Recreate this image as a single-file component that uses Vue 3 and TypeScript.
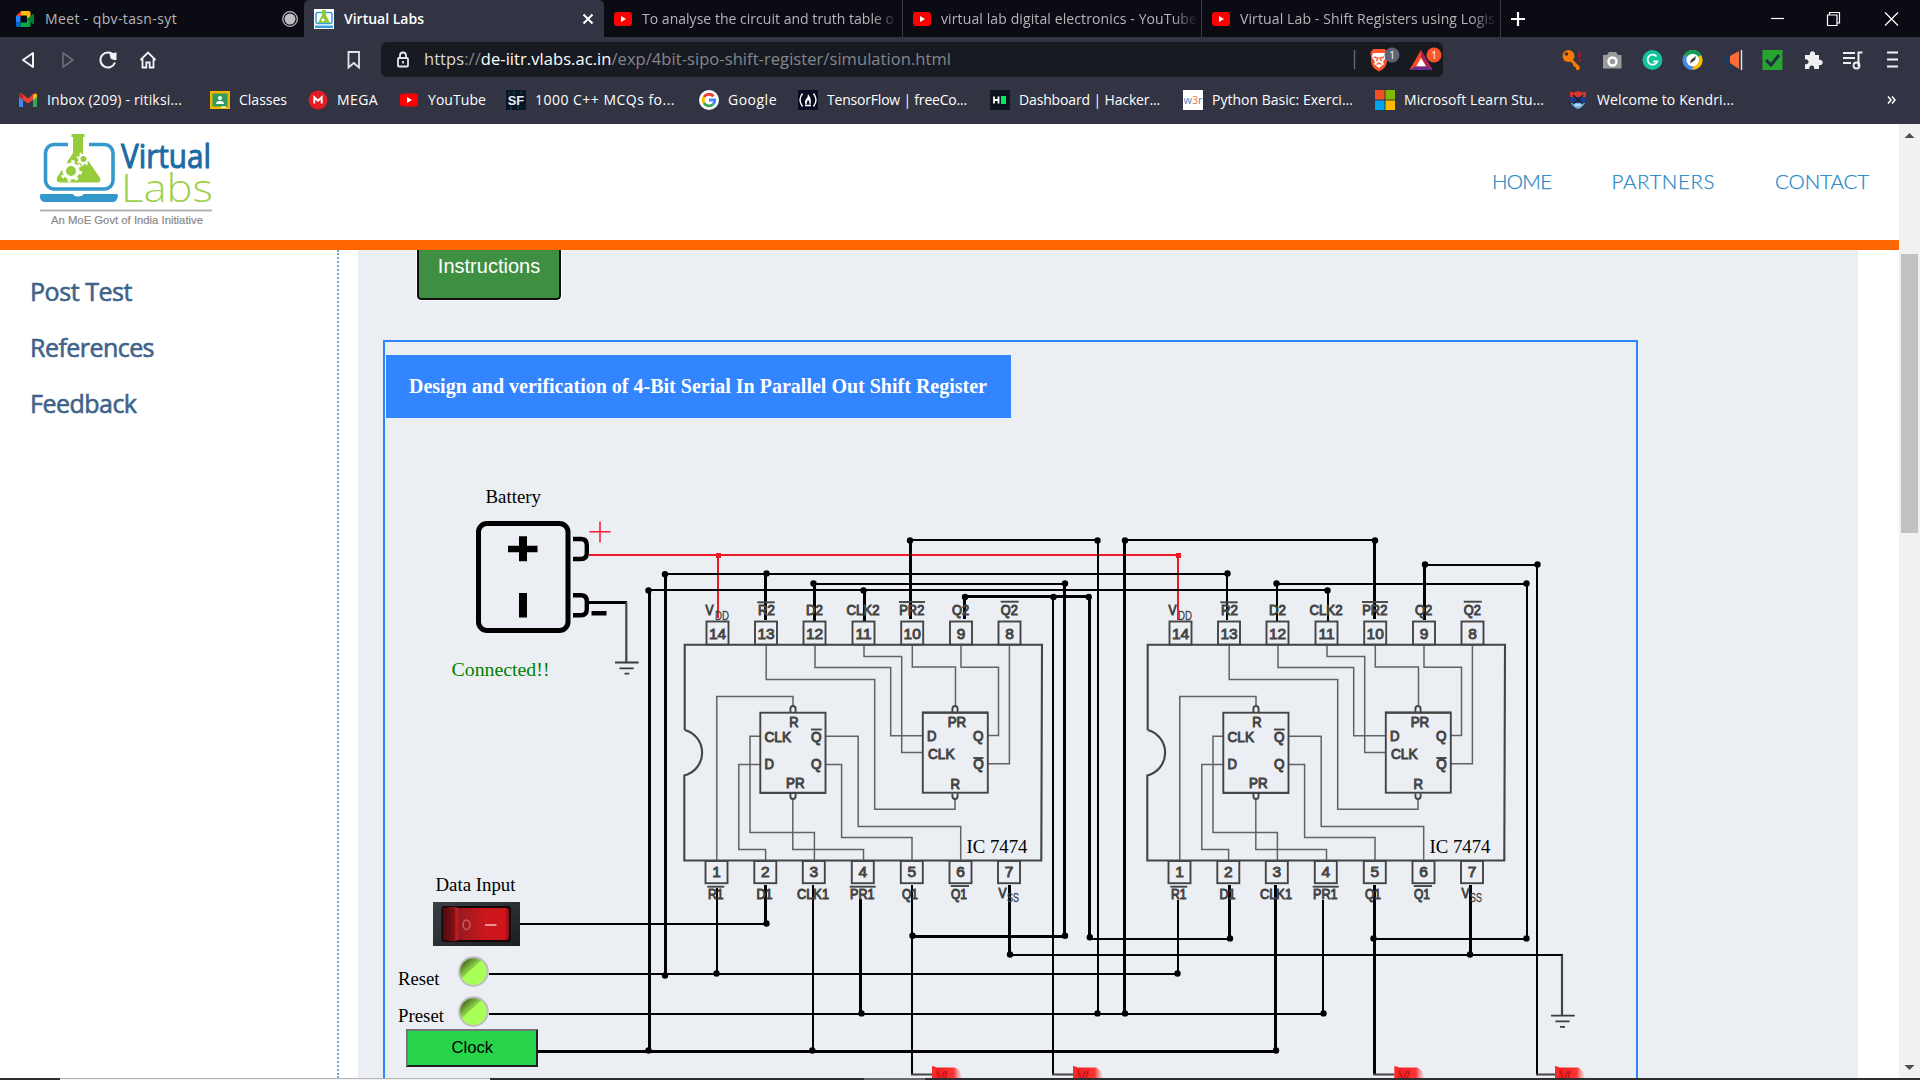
<script setup lang="ts">
type Wire = [number, number, number, number, number]
type Label = { t: string; x: number; y: number; w: number; bar?: [number, number, number] }

// Spreads a text run over a fixed width by adjusting its tracking.
const vFit = {
  mounted(el: HTMLElement, binding: { value: number }) {
    const n = (el.textContent ?? '').length
    const natural = el.getBoundingClientRect().width
    el.style.letterSpacing = `${(binding.value - natural) / n}px`
  },
}

const videoTabs = [
  { title: 'To analyse the circuit and truth table o', w: 252 },
  { title: 'virtual lab digital electronics - YouTube', w: 256 },
  { title: 'Virtual Lab - Shift Registers using Logis', w: 255 },
]

const bookmarks = [
  { id: 'gmail', label: 'Inbox (209) - ritiksi...', text: 135, slot: 192 },
  { id: 'classes', label: 'Classes', text: 48, slot: 98 },
  { id: 'mega', label: 'MEGA', text: 41, slot: 91 },
  { id: 'yt', label: 'YouTube', text: 58, slot: 107 },
  { id: 'sf', label: '1000 C++ MCQs fo...', text: 140, slot: 193 },
  { id: 'google', label: 'Google', text: 49, slot: 99 },
  { id: 'fcc', label: 'TensorFlow | freeCo...', text: 140, slot: 192 },
  { id: 'hr', label: 'Dashboard | Hacker...', text: 141, slot: 193 },
  { id: 'w3r', label: 'Python Basic: Exerci...', text: 141, slot: 192 },
  { id: 'ms', label: 'Microsoft Learn Stu...', text: 140, slot: 193 },
  { id: 'kv', label: 'Welcome to Kendri...', text: 137, slot: 180 },
]

const menu = [
  { t: 'HOME', w: 59.5 },
  { t: 'PARTNERS', w: 103.5 },
  { t: 'CONTACT', w: 94 },
]
const side = [
  { t: 'Post Test', w: 102 },
  { t: 'References', w: 124 },
  { t: 'Feedback', w: 106.5 },
]

const wires: Wire[] = [
  [649.5, 590, 649.5, 1051, 3], [665.5, 574, 665.5, 975, 3],
  [910, 540, 1098, 540, 2], [910.5, 540, 910.5, 619, 3], [1098, 540, 1098, 1013, 2],
  [665, 574, 1228, 574, 2], [765.5, 574, 765.5, 620, 3], [1227, 574, 1227, 620, 2],
  [813, 584, 1065, 584, 2], [814.5, 584, 814.5, 621, 3], [1064.5, 584, 1064.5, 937, 3],
  [649, 590, 1328, 590, 2], [864.5, 590, 864.5, 621, 3], [1328, 590, 1328, 621, 2],
  [965, 596.5, 1089, 596.5, 3], [964.5, 597, 964.5, 619, 3], [1053, 597, 1053, 1075, 2],
  [1089.5, 597, 1089.5, 939, 3],
  [1125, 540, 1375, 540, 2], [1124.5, 540, 1124.5, 1013, 3], [1374.5, 540, 1374.5, 619, 3],
  [1425, 565, 1538, 565, 2], [1424.5, 565, 1424.5, 620, 3], [1537, 565, 1537, 1075, 2],
  [1277, 584, 1527, 584, 2], [1277, 584, 1277, 621, 2], [1527, 584, 1527, 938, 2],
  [520, 924, 766, 924, 2], [765.5, 885, 765.5, 924, 3],
  [489, 974, 1177, 974, 2], [717, 888, 717, 974, 2],
  [538, 1051.5, 1276, 1051.5, 3], [813, 885, 813, 1051, 2],
  [489, 1014, 1323, 1014, 2], [860.5, 899, 860.5, 1013, 3],
  [912, 885, 912, 1075, 2], [912, 936.5, 1065, 936.5, 3],
  [1009.5, 885, 1009.5, 955, 3], [1010, 955, 1563, 955, 2],
  [1089, 939, 1230, 939, 2], [1229.5, 885, 1229.5, 939, 3],
  [1178, 900, 1178, 974, 2], [1275.5, 885, 1275.5, 1051, 3], [1323, 900, 1323, 1013, 2],
  [1374.5, 885, 1374.5, 1075, 3], [1374, 939, 1527, 939, 2], [1470.5, 885, 1470.5, 955, 3],
  [589, 602.5, 627, 602.5, 3],
]
const redWires: Wire[] = [
  [589, 555, 1180, 555, 2], [718, 555, 718, 618, 2], [1178, 555, 1178, 620, 2],
]
const nodes: [number, number][] = [
  [910, 540.5], [1097.5, 540.5], [665, 574.3], [766.5, 573.5], [1227.5, 573.5],
  [813.5, 583.5], [1065, 583.5], [648.5, 590.5], [863.5, 590.5], [1327.5, 590.5],
  [965, 597], [1053.5, 597], [1088.7, 597], [1125, 540.5], [1375, 540.5],
  [1425, 564.5], [1537.5, 564.5], [1276.5, 583.5], [1526.5, 583.5],
  [766.5, 923.5], [665, 975.5], [716.5, 973.5], [1177.5, 973.5],
  [648.5, 1050.5], [812.3, 1050.5], [1276, 1050.5],
  [861.5, 1013.4], [1097.5, 1013.4], [1125, 1013.4], [1323.5, 1013.4],
  [912.5, 935.7], [1065, 935.7], [1010, 954.5], [1470, 954.5],
  [1089.8, 937.3], [1230, 938.4], [1373.5, 938.4], [1526.5, 938.4],
]

const chips = [0, 463]
const topPins = [14, 13, 12, 11, 10, 9, 8].map((n, i) => ({ n, x: [706.5, 755, 803.5, 852.5, 901.2, 950, 998.5][i] }))
const lowPins = [1, 2, 3, 4, 5, 6, 7].map((n, i) => ({ n, x: [705.5, 754.3, 802.8, 851.8, 900.8, 949.5, 998][i] }))

const pinLabels: Label[] = [
  { t: 'V', x: 705.5, y: 615.3, w: 8 },
  { t: 'R2', x: 758, y: 615.3, w: 17, bar: [757.3, 774.7, 602.3] },
  { t: 'D2', x: 806, y: 615.3, w: 17 },
  { t: 'CLK2', x: 846.5, y: 615.3, w: 33 },
  { t: 'PR2', x: 899.3, y: 615.3, w: 25, bar: [899, 925, 602] },
  { t: 'Q2', x: 952, y: 615.3, w: 17.3 },
  { t: 'Q2', x: 1000.8, y: 615.3, w: 17, bar: [1000.7, 1018.7, 601.7] },
  { t: 'R1', x: 708, y: 899, w: 15.5, bar: [707.3, 724.3, 886.7] },
  { t: 'D1', x: 756.5, y: 899, w: 16 },
  { t: 'CLK1', x: 797, y: 899, w: 32 },
  { t: 'PR1', x: 850, y: 899, w: 24.5, bar: [849.7, 875.7, 886.7] },
  { t: 'Q1', x: 902, y: 899, w: 16 },
  { t: 'Q1', x: 951, y: 899, w: 16, bar: [950.7, 969, 886] },
  { t: 'V', x: 998.5, y: 898, w: 8 },
]
const gateLabels: Label[] = [
  { t: 'R', x: 789.3, y: 727.3, w: 9.3 },
  { t: 'CLK', x: 764.5, y: 741.5, w: 26.5 },
  { t: 'Q', x: 811, y: 741.5, w: 10.5, bar: [811, 821.7, 729.5] },
  { t: 'D', x: 764.5, y: 769.3, w: 9.5 },
  { t: 'Q', x: 811, y: 769.3, w: 10.5 },
  { t: 'PR', x: 786, y: 788, w: 18.5 },
  { t: 'PR', x: 947.7, y: 727.3, w: 18.5 },
  { t: 'D', x: 927, y: 740.7, w: 9.5 },
  { t: 'Q', x: 973, y: 740.7, w: 10.5 },
  { t: 'CLK', x: 928, y: 759, w: 26.5 },
  { t: 'Q', x: 973.3, y: 769, w: 10.5, bar: [973.3, 983.5, 758] },
  { t: 'R', x: 950.5, y: 789.3, w: 9.5 },
]
const traces = [
  'M766.2 645V679.5H874.7V809.3H955V799.5',
  'M815 645V667.4H890.7V735.7H922.7',
  'M864 645V656.4H901.7V752.4H922.7',
  'M912.3 645V667H955.5V706',
  'M961 645V667.3H998.5V735.5H988',
  'M1009.4 645V763.8H988',
  'M716.8 861V696.4H793V706',
  'M760.3 736.2H750V832.5H814.4V861',
  'M760.3 764.4H738.8V849.4H765.6V861',
  'M792.8 799.5V849.4H863.5V861',
  'M825.5 736.2H858.2V826.4H960.7V861',
  'M825.5 764.4H841.6V837.6H912V861',
]
const leds = [
  { wire: 912, x: 932 }, { wire: 1053, x: 1073 }, { wire: 1374, x: 1394.3 }, { wire: 1537, x: 1555 },
]
const pushButtons = [971.5, 1011.5]
</script>

<template>
  <div class="screen">
    <div class="tabs">
      <div class="tab first">
        <svg width="20" height="20" viewBox="0 0 20 20">
          <path d="M1 7 6 2v5z" fill="#ea4335" /><path d="M6 2h8q1.500 0 1.500 1.500V8l-3.500 2V6.500H6z" fill="#fbbc04" />
          <path d="M1 7h4.500v6.500H1z" fill="#2684fc" /><path d="M1 13.500h4.500V18H2.500Q1 18 1 16.500z" fill="#0066da" />
          <path d="M5.500 13.500H12V10l3.500 2v4.500Q15.500 18 14 18H5.500z" fill="#00ac47" /><path d="M12 10l6-5q1-.6 1 .5v9q0 1.100-1 .5z" fill="#00832d" />
        </svg>
        <span v-fit="132" class="tt">Meet - qbv-tasn-syt</span>
        <svg class="rec" width="18" height="18" viewBox="0 0 18 18"><circle cx="9" cy="9" r="7.300" fill="none" stroke="#bdbdc2" stroke-width="1.200" /><circle cx="9" cy="9" r="5.500" fill="#bdbdc2" /></svg>
      </div>
      <div class="tab active">
        <svg width="20" height="20" viewBox="0 0 20 20"><path fill="#fff" d="M0 0h20v20H0z" /><rect x="2" y="3.500" width="16" height="11" rx="2" fill="none" stroke="#3a9fd8" stroke-width="1.500" /><path d="M8 1h4v5l4 8H4l4-8z" fill="#8fc83c" /><circle cx="9" cy="11" r="1.500" fill="#fff" /><path d="M1 16.500h18V19H1z" fill="#3a9fd8" /></svg>
        <span v-fit="80" class="tt">Virtual Labs</span>
        <svg class="x" width="12" height="12" viewBox="0 0 12 12"><path d="M1.500 1.500l9 9M10.500 1.500l-9 9" stroke="#fff" stroke-width="2" /></svg>
      </div>
      <div v-for="v in videoTabs" :key="v.title" class="tab video">
        <svg width="18" height="14" viewBox="0 0 18 14"><rect width="18" height="14" rx="3" fill="#f00" /><path d="M7 4v6l5-3z" fill="#fff" /></svg>
        <div class="clip"><span v-fit="v.w" class="tt">{{ v.title }}</span></div>
      </div>
      <svg class="plus" width="16" height="16" viewBox="0 0 16 16"><path d="M8 1v14M1 8h14" stroke="#fff" stroke-width="2.200" /></svg>
      <svg class="win" width="130" height="16" viewBox="0 0 130 16" fill="none" stroke="#fff" stroke-width="1.200">
        <path d="M2 7.500h13" /><path d="M58.500 4h9.500v10.500h-9.500zM60.500 4V1.500h10V12h-2.500" /><path d="M116 1.500l13 13M129 1.500l-13 13" />
      </svg>
    </div>

    <div class="toolbar">
      <svg class="nav" width="150" height="24" viewBox="0 0 150 24" fill="none" stroke="#f2f2f5" stroke-width="2">
        <path d="M15 5v14L5 12z" stroke-linejoin="round" />
        <path d="M45 5v14l10-7z" stroke="#6b6d79" stroke-width="1.600" stroke-linejoin="round" />
        <path d="M96 7.500A7.500 7.500 0 1 0 97 14.500" /><path d="M91.500 5.500l7-1v7.500q-5 0-6-2z" fill="#f2f2f5" stroke="none" />
        <path d="M122.500 12l7.500-7.500 7.500 7.500M124.500 11v8.500h3.800v-5h3.400v5h3.800V11" stroke-width="1.800" />
      </svg>
      <svg class="mark" width="16" height="20" viewBox="0 0 16 20"><path d="M2.500 2h10.500v15.500L7.800 13l-5.300 4.500z" fill="none" stroke="#e6e6ea" stroke-width="1.800" /></svg>
      <div class="url">
        <svg width="14" height="18" viewBox="0 0 14 18" fill="none" stroke="#e6e6ea" stroke-width="1.800"><rect x="2" y="7" width="10" height="8.500" rx="1" /><path d="M4 7V4.500a3 3 0 0 1 6 0V7M7 10v2.500" /></svg>
        <span v-fit="527" class="addr"><i>https</i>://<b>de-iitr.vlabs.ac.in</b>/exp/4bit-sipo-shift-register/simulation.html</span>
        <svg class="shields" width="92" height="34" viewBox="1351 43 92 34">
          <path d="M1354.500 50v19" stroke="#666a72" stroke-width="1.300" />
          <path d="M1370.500 52l3-3h11l3.500 3-1.500 12q-1 4-7.500 7.500-6.500-3.500-7.500-7.500z" fill="#fb542b" /><path d="M1373 53h12l1 4-3 5 1 2-5 4-5-4 1-2-3-5z" fill="#fff" /><path d="M1374 57l4 1.200-1.500 3M1384 57l-4 1.200 1.500 3M1376.500 64.500l2.500-1.500 2.500 1.500" fill="none" stroke="#fb542b" stroke-width="1.400" />
          <circle cx="1392" cy="55" r="7.500" fill="#5f6375" /><text x="1392" y="58.500" class="badge">1</text>
          <path d="M1421 50l-11.500 20h23z" fill="#ff4724" /><path d="M1421 50l11.500 20-5.500-3.500-6-10z" fill="#9e1f63" /><path d="M1409.500 70h23l-5.500-3.500h-12z" fill="#662d91" /><path d="M1421 58l-4.800 8.300h9.600z" fill="#fff" />
          <circle cx="1434" cy="55" r="7.500" fill="#fb542b" /><text x="1434" y="58.500" class="badge">1</text>
        </svg>
      </div>
      <svg class="ext" width="350" height="26" viewBox="1555 47 350 26">
        <g><circle cx="1568.500" cy="56" r="6" fill="#f57c00" /><circle cx="1566.500" cy="54" r="1.800" fill="#323443" /><path d="M1572 59l8 8-1 3h-2.500l-1-3-2-.5-.5-2.500-3-3z" fill="#f57c00" /><path d="M1579.500 52v6M1579.500 59.500v2" stroke="#e0002a" stroke-width="2" /></g>
        <g><path d="M1603 55h4l2-3h7l2 3h3.500v13.500h-18.500z" fill="#9b9b9b" /><circle cx="1612.500" cy="61.500" r="4" fill="none" stroke="#fff" stroke-width="2.400" /></g>
        <g><circle cx="1652.400" cy="60" r="10" fill="#11c39a" /><path d="M1656.500 56.500a5 5 0 1 0 .8 5h-4" fill="none" stroke="#fff" stroke-width="1.800" /></g>
        <g><circle cx="1692.700" cy="60" r="10" fill="#fbbc04" /><path d="M1692.700 60l-8.700-5a10 10 0 0 1 17.400 0z" fill="#0f9d58" /><path d="M1692.700 60v10a10 10 0 0 1-8.700-15z" fill="#4285f4" /><circle cx="1692.700" cy="60" r="6.300" fill="#fff" /><path d="M1690 63.500l1-3.500 5-4-1 4z" fill="#333" /></g>
        <g><path d="M1723 56l7-1v9l3 5h-5l-2-5-3-1z" fill="#1f3a57" /><path d="M1730 56l9-5v18l-9-6z" fill="#ff6c3b" /><path d="M1741.500 50v20" stroke="#d8e0e8" stroke-width="1.500" /></g>
        <path d="M1762.500 50h20v20h-20z" fill="#28a52f" /><path d="M1766 60l5 5 8-10" fill="none" stroke="#222c44" stroke-width="3" />
        <path d="M1805 55h5a2.700 2.700 0 1 1 5 0h4v5a2.700 2.700 0 1 1 0 5v4h-5a2.500 2.500 0 1 0-4.500 0h-4.500v-5a2.500 2.500 0 1 0 0-4.500z" fill="#f0f0f3" />
        <path d="M1843 53h12M1843 58h12M1843 63h8" stroke="#f0f0f3" stroke-width="1.800" /><path d="M1858.500 66V52.500h4" stroke="#f0f0f3" stroke-width="2" fill="none" /><circle cx="1856.500" cy="65.500" r="3" fill="none" stroke="#f0f0f3" stroke-width="1.800" />
        <path d="M1887 52.500h11M1887 59.500h11M1887 66.500h11" stroke="#f0f0f3" stroke-width="1.800" />
      </svg>
    </div>

    <div class="marks">
      <div v-for="b in bookmarks" :key="b.id" class="bm" :style="{ width: b.slot + 'px' }">
        <svg width="20" height="20" viewBox="0 0 20 20">
          <g v-if="b.id === 'gmail'"><path d="M1 5v11q0 1 1 1h3V8z" fill="#4285f4" /><path d="M19 5v11q0 1-1 1h-3V8z" fill="#34a853" /><path d="M1 6q0-3.500 3-2.500l6 5 6-5q3-1 3 2.500l-4 4-5 3.500L5 10z" fill="#ea4335" /><path d="M15 5v5l4-3V5q-1-2.500-4 0z" fill="#fbbc04" /><path d="M1 5v2l4 3V5Q2 2.500 1 5z" fill="#c5221f" /></g>
          <g v-else-if="b.id === 'classes'"><path d="M0 1h20v18H0z" fill="#f4b400" /><path d="M2.500 3.500h15v13h-15z" fill="#2f9e5c" /><circle cx="10" cy="8" r="2" fill="#fff" /><path d="M6 14q0-3 4-3t4 3z" fill="#fff" /><path d="M11 16.500h5V18h-5z" fill="#eee" /></g>
          <g v-else-if="b.id === 'mega'"><circle cx="10" cy="10" r="9.500" fill="#e31b23" /><path d="M6.300 13.500V7.200l3.700 3.500 3.700-3.500v6.300" fill="none" stroke="#fff" stroke-width="1.900" /></g>
          <g v-else-if="b.id === 'yt'"><rect x="1" y="3.500" width="18" height="13" rx="3" fill="#f00" /><path d="M8 7v6l5-3z" fill="#fff" /></g>
          <g v-else-if="b.id === 'sf'"><path d="M0 0h20v20H0z" fill="#081523" /><path d="M3 2v3M8 1v4M15 1v3M5 16v4M12 15v4" stroke="#17456b" /><text x="10" y="14.500" class="sf">SF</text></g>
          <g v-else-if="b.id === 'google'"><circle cx="10" cy="10" r="10" fill="#fff" /><g fill="none" stroke-width="2.800"><path d="M14.500 6.200A6 6 0 0 0 5 7" stroke="#ea4335" /><path d="M5 7a6 6 0 0 0 0 6" stroke="#fbbc04" /><path d="M5 13a6 6 0 0 0 9 1.500" stroke="#34a853" /><path d="M14 14.500a6 6 0 0 0 1.800-4.500H10" stroke="#4285f4" /></g></g>
          <g v-else-if="b.id === 'fcc'"><path d="M0 0h20v20H0z" fill="#0a0a23" /><path d="M4.500 3.500q-5 6.500 0 13M15.500 3.500q5 6.500 0 13M7 15.500h6" fill="none" stroke="#fff" stroke-width="1.400" /><path d="M10 4q4 5 2.500 10.500h-1.200Q12 11 10 10q-1.500 2-1.300 4.500H7.500Q6 11 8.500 8.500 10 7 10 4z" fill="#fff" /></g>
          <g v-else-if="b.id === 'hr'"><path d="M0 0h20v20H0z" fill="#0e141e" /><path d="M4 6.500v7M8.500 6.500v7M4 10h4.500" stroke="#fff" stroke-width="1.800" /><path d="M11 6h5v8h-5z" fill="#00ea64" /></g>
          <g v-else-if="b.id === 'w3r'"><path d="M0 0h20v20H0z" fill="#fff" /><text x="0.500" y="13.500" textLength="19" lengthAdjust="spacingAndGlyphs" class="w3">w<tspan fill="#ee7a2f">3</tspan>r</text></g>
          <g v-else-if="b.id === 'ms'"><path d="M0 0h9.500v9.500H0z" fill="#f25022" /><path d="M10.500 0H20v9.500h-9.500z" fill="#7fba00" /><path d="M0 10.500h9.500V20H0z" fill="#00a4ef" /><path d="M10.500 10.500H20V20h-9.500z" fill="#ffb900" /></g>
          <g v-else><path d="M2 1.500l4 1 4-1.500 4 1.500 4-1v6H2z" fill="#d9362a" /><path d="M2 7h16l-1 6H3z" fill="#1c3d96" /><path d="M3 13h14q-2 4-7 6-5-2-7-6z" fill="#6db6e6" /><path d="M5 5l5 5 5-5M5 14l5-4 5 4" stroke="#222" fill="none" stroke-width="1.600" /><path d="M7 15h6" stroke="#fff" /></g>
        </svg>
        <span v-fit="b.text">{{ b.label }}</span>
      </div>
      <svg class="more" width="10" height="10" viewBox="0 0 10 10"><path d="M1 1.500l3 3.500-3 3.500M5 1.500l3 3.500-3 3.500" fill="none" stroke="#fff" stroke-width="1.500" /></svg>
    </div>

    <div class="page">
      <div class="doc">
        <header>
          <svg class="logo" width="180" height="98" viewBox="36 132 180 98">
            <path d="M68 145.500H54a8.500 8.500 0 0 0-8.500 8.500v27.500a8.500 8.500 0 0 0 8.500 8.500h50.500a8.500 8.500 0 0 0 8.500-8.500V154a8.500 8.500 0 0 0-8.500-8.500H89" fill="none" stroke="#3399cc" stroke-width="3.600" />
            <path d="M71.500 135h13v3H83v16l17 25q1.500 4.500-3 4.500H60.500q-5 0-3.500-5l16-24.500v-16h-1.500z" fill="#96cb3c" />
            <circle cx="71" cy="172" r="6.800" fill="none" stroke="#fff" stroke-width="3.600" /><circle cx="71" cy="172" r="9.700" fill="none" stroke="#fff" stroke-width="2.600" stroke-dasharray="3.400 4.218" />
            <circle cx="83.500" cy="160" r="4.200" fill="none" stroke="#fff" stroke-width="2.300" /><circle cx="83.500" cy="160" r="6" fill="none" stroke="#fff" stroke-width="1.600" stroke-dasharray="2.200 2.512" />
            <path d="M42 195h31q1 2.500 5 2.500t6-2.500h32q3 0 1.500 3.500-1 4.500-5 4.500H45q-4 0-5-4.500-1-3.500 2-3.500z" fill="#3399cc" />
            <text x="121" y="169" class="virt" textLength="90" lengthAdjust="spacingAndGlyphs">Virtual</text>
            <text x="121" y="202.500" class="labs" textLength="92" lengthAdjust="spacingAndGlyphs">Labs</text>
            <path d="M40 211.500h172" stroke="#b4b4b4" stroke-width="2" />
            <text x="51" y="225" class="moe" textLength="152" lengthAdjust="spacingAndGlyphs">An MoE Govt of India Initiative</text>
          </svg>
          <nav><a v-for="m in menu" :key="m.t"><span v-fit="m.w">{{ m.t }}</span></a></nav>
        </header>
        <div class="cols">
          <aside><div v-for="s in side" :key="s.t"><span v-fit="s.w">{{ s.t }}</span></div></aside>
          <main>
            <button class="instr">Instructions</button>
            <section class="frame">
              <h1><span v-fit="578">Design and verification of 4-Bit Serial In Parallel Out Shift Register</span></h1>
              <svg class="board" width="1251" height="660" viewBox="385 418 1251 660">
                <defs>
                  <linearGradient id="led" x1="0" x2="1"><stop offset="0" stop-color="#f01c1c" /><stop offset=".7" stop-color="#ff3636" /><stop offset="1" stop-color="#ff8a8a" stop-opacity=".15" /></linearGradient>
                  <linearGradient id="case" x1="0" y1="0" x2="1" y2="1"><stop offset="0" stop-color="#394046" /><stop offset="1" stop-color="#1a1e1e" /></linearGradient>
                  <linearGradient id="rocker" x1="0" x2="1"><stop offset="0" stop-color="#55090e" /><stop offset=".17" stop-color="#7d1015" /><stop offset=".2" stop-color="#c51b22" /><stop offset=".25" stop-color="#98191f" /><stop offset=".65" stop-color="#cb171c" /><stop offset=".93" stop-color="#cf151b" /><stop offset="1" stop-color="#8a1014" /></linearGradient>
                  <linearGradient id="lamp" x1=".15" y1=".1" x2=".6" y2=".6"><stop offset="0" stop-color="#47691f" /><stop offset=".62" stop-color="#93d84c" /><stop offset=".64" stop-color="#a8ff58" /></linearGradient>
                </defs>

                <g shape-rendering="crispEdges">
                  <line v-for="(w, i) in redWires" :key="'r' + i" :x1="w[0]" :y1="w[1]" :x2="w[2]" :y2="w[3]" :stroke-width="w[4]" stroke="#ed1c24" />
                  <line v-for="(w, i) in wires" :key="'w' + i" :x1="w[0]" :y1="w[1]" :x2="w[2]" :y2="w[3]" :stroke-width="w[4]" stroke="#000" />
                  <path d="M716 553h5v5h-5zM1176 553h5v5h-5z" fill="#ed1c24" />
                </g>
                <circle v-for="(n, i) in nodes" :key="'n' + i" :cx="n[0]" :cy="n[1]" r="3.200" />

                <text x="485.500" y="503" class="serif" textLength="55.500" lengthAdjust="spacingAndGlyphs">Battery</text>
                <rect x="478.500" y="523.500" width="89.500" height="107" rx="8.500" fill="none" stroke="#000" stroke-width="5" />
                <path d="M508 545.700h11v-9.400h8v9.400h10.500v6.600H527v9h-8v-9h-11zM519 593h8v24.500h-8z" />
                <path d="M573 539h8q5.800 0 5.800 6v8q0 6-5.800 6h-8M573 595.300h8q5.800 0 5.800 6v8q0 6-5.800 6h-8" fill="none" stroke="#000" stroke-width="4.400" />
                <path d="M600 521.500v21M589.500 531.700h21" stroke="#ff1430" stroke-width="1.500" />
                <path d="M591.500 611h15v4.500h-15z" />
                <path d="M626.300 602v60M1562 955v60" stroke="#444" stroke-width="2.200" />
                <path d="M615 662.500h23.700M619.500 668.300h14.200M624.500 673.700h4.800M1551 1015.700h23.700M1555.400 1021.400h14.200M1560 1026.800h5" stroke="#3a3a3a" stroke-width="1.800" />
                <text x="451.500" y="676" class="serif ok" textLength="98" lengthAdjust="spacingAndGlyphs">Connected!!</text>

                <g v-for="dx in chips" :key="dx" :transform="`translate(${dx} 0)`" class="chip">
                  <path d="M684.700 730V644.700H1042L1041.300 860.500H684.300V775.500A23.500 23.500 0 0 0 684.700 730" class="body" />
                  <path v-for="t in traces" :key="t" :d="t" class="trace" />
                  <rect x="760.300" y="712.700" width="65.200" height="80.300" class="gate" />
                  <rect x="922.800" y="712.500" width="65" height="80.200" class="gate" />
                  <path d="M760 792.800h66M922 712.700h66" stroke-width="2" />
                  <path v-for="bx in [793, 955]" :key="bx" :d="`M${bx - 2.600} 712v-3q0-3 2.600-3t2.600 3v3M${bx - 2.600} 793.500v2.500q0 3 2.600 3t2.600-3v-2.500`" fill="none" stroke-width="1.900" />
                  <g v-for="p in topPins" :key="p.n"><rect :x="p.x" y="621.500" width="22" height="23" class="pin" /><text :x="p.x + 11" y="639.300" class="num">{{ p.n }}</text></g>
                  <g v-for="p in lowPins" :key="p.n"><rect :x="p.x" y="861" width="22" height="22.200" class="pin" /><text :x="p.x + 11" y="877" class="num">{{ p.n }}</text></g>
                  <g v-for="(l, i) in [...pinLabels, ...gateLabels]" :key="i">
                    <text :x="l.x" :y="l.y" :textLength="l.w" lengthAdjust="spacingAndGlyphs" class="lab">{{ l.t }}</text>
                    <path v-if="l.bar" :d="`M${l.bar[0]} ${l.bar[2]}H${l.bar[1]}`" stroke-width="1.900" />
                  </g>
                  <text x="715" y="620.300" textLength="14" lengthAdjust="spacingAndGlyphs" class="sub">DD</text>
                  <text x="1007" y="901.700" textLength="12" lengthAdjust="spacingAndGlyphs" class="sub">SS</text>
                  <text x="966.500" y="852.700" class="serif" textLength="61" lengthAdjust="spacingAndGlyphs">IC 7474</text>
                </g>

                <text x="435.500" y="891" class="serif" textLength="80" lengthAdjust="spacingAndGlyphs">Data Input</text>
                <rect x="433" y="902" width="87" height="44" fill="url(#case)" />
                <rect x="441.500" y="906" width="69.500" height="36" rx="3" fill="#120708" />
                <path d="M443 908l11-1.500 4 1.500h48q3 0 3 3v26q0 3-3 3h-48l-4 1.500-11-1.500z" fill="url(#rocker)" />
                <ellipse cx="466.500" cy="924.800" rx="3.500" ry="4.700" fill="none" stroke="#c65a5e" stroke-width="1.600" />
                <path d="M485 925h11.500" stroke="#eb9296" stroke-width="2" />
                <text x="398" y="985" class="serif" textLength="41.500" lengthAdjust="spacingAndGlyphs">Reset</text>
                <text x="398" y="1022" class="serif" textLength="46" lengthAdjust="spacingAndGlyphs">Preset</text>
                <g v-for="cy in pushButtons" :key="cy"><circle cx="473.500" :cy="cy" r="15.300" fill="#bdbcc0" /><circle cx="473.500" :cy="cy" r="13.300" fill="url(#lamp)" /></g>
                <path d="M406 1029h132v38H406z" fill="#222" /><path d="M406 1067v-38h132l-2 2H408v34z" fill="#767676" /><path d="M408 1031h128v34H408z" fill="#28d44a" />
                <text x="451.500" y="1052.700" class="clock" textLength="41.500" lengthAdjust="spacingAndGlyphs">Clock</text>

                <g v-for="l in leds" :key="l.x">
                  <path :d="`M${l.wire - 1} 1074.500H${l.x}`" stroke="#444" stroke-width="2" />
                  <path :d="`M${l.x + 3} 1067.500h20q6 2 7 11h-27z`" fill="url(#led)" />
                  <path :d="`M${l.x} 1066l4 1v11h-4z`" fill="#f52a2a" />
                  <path :d="`M${l.x + 5} 1071l3 7M${l.x + 10} 1078l2-6h3l-2 6`" fill="none" stroke="#c0151a" stroke-width="1.500" />
                </g>
              </svg>
            </section>
          </main>
        </div>
      </div>
      <div class="scroll">
        <svg width="21" height="24" viewBox="0 0 21 24"><path d="M10.500 9l5 5h-10z" fill="#505050" /></svg>
        <div class="thumb"></div>
        <svg class="dn" width="21" height="24" viewBox="0 0 21 24"><path d="M10.500 16l5-5h-10z" fill="#505050" /></svg>
      </div>
    </div>
    <div class="edge"><div class="lite"></div><div class="dim"></div></div>
  </div>
</template>

<style>
html, body { margin: 0; overflow: hidden; background: #fff; }
</style>

<style scoped>
.screen { width: 1920px; height: 1080px; display: flex; flex-direction: column; overflow: hidden; font-family: "Open Sans", "Noto Sans", sans-serif; }
.screen svg { display: block; flex: none; }
span { white-space: nowrap; }
.tabs { height: 37px; flex: none; background: #0b0b14; display: flex; align-items: center; color: #b4b4b9; font-size: 14px; }
.tab { height: 37px; box-sizing: border-box; display: flex; align-items: center; flex: none; }
.first { width: 304px; padding: 0 5px 0 15px; }
.first .tt { margin-left: 10px; }
.rec { margin-left: auto; }
.active { width: 300px; padding: 0 10px; background: #323443; color: #fff; font-weight: 600; border-radius: 5px 5px 0 0; }
.active .tt { margin-left: 10px; }
.x { margin-left: auto; }
.video { width: 299px; padding-left: 10px; border-right: 1px solid #3b3b43; }
.video svg { margin-right: 10px; }
.clip { width: 257px; overflow: hidden; -webkit-mask-image: linear-gradient(90deg, #000 90%, transparent); mask-image: linear-gradient(90deg, #000 90%, transparent); }
.plus { margin-left: 9px; }
.win { margin: 0 21px 0 auto; }
.toolbar { height: 46px; flex: none; box-sizing: border-box; padding-bottom: 1px; background: #323443; display: flex; align-items: center; }
.nav { margin-left: 18px; }
.mark { margin-left: 178px; }
.url { width: 1062px; height: 35px; margin-left: 19px; background: #181a21; border-radius: 6px; display: flex; align-items: center; }
.url > svg:first-child { margin-left: 15px; }
.addr { margin: -2px 0 0 14px; font-size: 16.500px; color: #85878c; }
.addr i { font-style: normal; color: #d5d6d9; }
.addr b { font-weight: 400; color: #fff; }
.shields { margin-left: auto; }
.badge { font: 10px "Open Sans", sans-serif; fill: #fff; text-anchor: middle; }
.ext { margin-left: 112px; }
.marks { height: 41px; flex: none; background: #323443; display: flex; align-items: center; padding-left: 18px; box-sizing: border-box; padding-bottom: 8px; color: #fff; font-size: 14px; }
.bm { display: flex; align-items: center; gap: 9px; flex: none; }
.bm span { margin-top: -1px; }
.more { margin: 0 23px 0 auto; }
.sf { font: bold 13px "Liberation Sans", sans-serif; fill: #e9eef2; text-anchor: middle; }
.w3 { font: 11.500px "Open Sans", sans-serif; fill: #5a86b8; }

.page { height: 954px; flex: none; display: flex; }
.doc { width: 1899px; height: 954px; overflow: hidden; background: #fff; }
header { height: 126px; box-sizing: border-box; border-bottom: 10px solid #f60; display: flex; align-items: center; padding: 0 30px 0 36px; }
.logo { margin-top: -4px; }
.virt { font: 33px/1 "Open Sans", sans-serif; fill: #1a6ba5; stroke: #1a6ba5; stroke-width: 1px; }
.labs { font: 300 38px/1 "Open Sans", sans-serif; fill: #9fd04c; }
.moe { font: 11.500px "Liberation Sans", sans-serif; fill: #8a8a8a; stroke: #8a8a8a; stroke-width: .2px; }
nav { margin: -3px 0 0 auto; display: flex; gap: 60px; font: 300 20.500px Lato, sans-serif; color: #2488c6; -webkit-text-stroke: .25px #2488c6; }
nav a { display: block; }
.cols { display: flex; height: 828px; }
aside { width: 339px; box-sizing: border-box; border-right: 2px dotted #86a9cb; padding: 13px 0 0 30px; color: #3e6389; font-size: 25px; -webkit-text-stroke: .6px #3e6389; }
aside div { height: 56px; line-height: 56px; }
main { width: 1500px; height: 828px; margin-left: 19px; background: #ebeff4; overflow: hidden; }
.instr { display: block; box-sizing: border-box; width: 144px; height: 70px; margin: -20px 0 0 59px; border: 2px solid #101010; border-radius: 4px; outline: 1px solid #fff; background: #3f8f42; color: #fff; font: 20px "Liberation Sans", Arial, sans-serif; padding: 3px 0 0; }
.frame { box-sizing: border-box; width: 1255px; height: 780px; margin: 40px 0 0 25px; border: 2px solid #2f84ff; border-bottom: 0; }
h1 { width: 625px; height: 63px; margin: 13px 0 0 1px; background: #3385ff; color: #fff; font: bold 20px/63px "Liberation Serif", "Times New Roman", serif; padding-left: 23px; box-sizing: border-box; }
.serif { font: 18.700px "Liberation Serif", "Times New Roman", serif; fill: #000; stroke: none; }
.ok { fill: #008000; }
.clock { font: 16.700px "Liberation Sans", Arial, sans-serif; fill: #000; }
.chip { stroke: #444; }
.body { fill: none; stroke-width: 2.100px; }
.trace { fill: none; stroke: #626262; stroke-width: 1.500px; }
.gate, .pin { fill: #ebeff4; stroke-width: 1.900px; }
.num { font: 15.500px "Liberation Sans", Arial, sans-serif; fill: #444; stroke-width: .9px; text-anchor: middle; }
.lab { font: 14px "Liberation Sans", Arial, sans-serif; fill: #444; stroke-width: 1px; }
.sub { font: 12px "Liberation Sans", Arial, sans-serif; fill: #444; stroke: #444; stroke-width: .3px; }
.scroll { width: 21px; height: 954px; background: #f1f1f1; display: flex; flex-direction: column; }
.thumb { width: 17px; height: 279px; margin: 106px 0 0 2px; background: #c1c1c1; }
.dn { margin-top: auto; }
.edge { height: 2px; flex: none; background: #2e2e31; display: flex; }
.lite { width: 430px; margin-left: 60px; background: linear-gradient(#b5b5b5 50%, #f2f2f2 50%); }
.dim { width: 61px; margin-left: 374px; background: #686868; }
</style>
